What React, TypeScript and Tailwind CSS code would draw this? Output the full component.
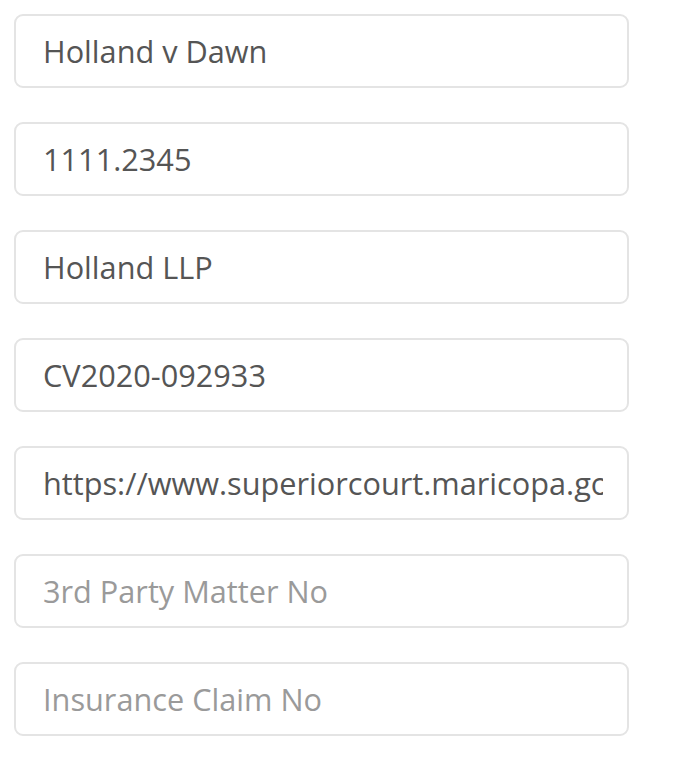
import React from "react";

const fields: { value?: string; placeholder: string }[] = [
  { value: "Holland v Dawn", placeholder: "Case Name" },
  { value: "1111.2345", placeholder: "Matter No" },
  { value: "Holland LLP", placeholder: "Firm" },
  { value: "CV2020-092933", placeholder: "Case No" },
  { value: "https://www.superiorcourt.maricopa.gov/docket", placeholder: "URL" },
  { placeholder: "3rd Party Matter No" },
  { placeholder: "Insurance Claim No" },
];

export default function App() {
  return (
    <div className="min-h-[772px] w-[683px] bg-white pt-[14px] pl-[14px]">
      <div className="flex w-[615px] flex-col gap-[34px]">
        {fields.map((f, i) => (
          <input
            key={i}
            readOnly
            value={f.value ?? ""}
            placeholder={f.placeholder}
            className="h-[74px] w-full rounded-[9px] border-2 border-[#e4e4e4] bg-white pl-[27px] pr-[24px] text-[30.7px] text-[#555555] outline-none placeholder:text-[#9a9a9a]"
            style={{ fontFamily: '"Open Sans", sans-serif' }}
          />
        ))}
      </div>
    </div>
  );
}
